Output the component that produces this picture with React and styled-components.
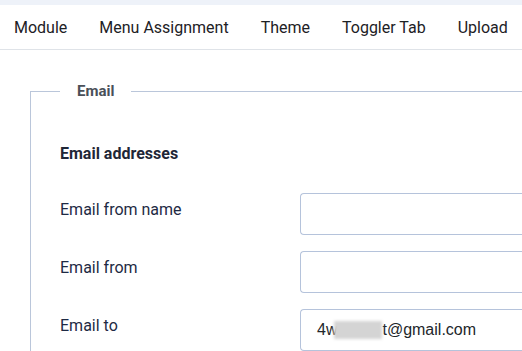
import styled, { createGlobalStyle } from "styled-components";

const GlobalStyle = createGlobalStyle`
  html, body {
    margin: 0;
    padding: 0;
    background: #fff;
    overflow: hidden;
  }
  body {
    font-family: Roboto, "Liberation Sans", sans-serif;
    color: #22262a;
  }
`;

const TopStrip = styled.div`
  height: 5px;
  background-color: #eef2f9;
`;

const Tabs = styled.nav`
  display: flex;
  align-items: center;
  height: 44px;
  padding-left: 14px;
  gap: 32px;
  border-bottom: 1px solid #dfe3e8;
  white-space: nowrap;
`;

const Tab = styled.span`
  font-size: 16px;
  color: #1d2125;
`;

const Content = styled.div`
  padding: 30px 0 0 30px;
`;

const Fieldset = styled.fieldset`
  margin: 0;
  padding: 40px 0 0 29px;
  border: 1px solid #bac6da;
  border-right: none;
  border-bottom: none;
  min-width: 0;
`;

const Legend = styled.legend`
  padding: 0 17px;
  font-size: 15px;
  font-weight: 700;
  line-height: 22px;
  color: #4a5058;
`;

const Heading = styled.h3`
  margin: 0 0 27px;
  font-size: 16px;
  font-weight: 700;
  line-height: 24px;
  color: #1f2737;
`;

const Rows = styled.div`
  display: flex;
  flex-direction: column;
  gap: 16px;
`;

const Row = styled.div`
  display: flex;
  align-items: flex-start;
`;

const Label = styled.label`
  flex: 0 0 240px;
  padding-top: 5px;
  font-size: 16px;
  line-height: 24px;
  color: #1e2a44;
`;

const Field = styled.div`
  flex: 0 0 222px;
  height: 42px;
  box-sizing: border-box;
  display: flex;
  align-items: center;
  padding: 0 0 0 16px;
  border: 1px solid #b5c3db;
  border-right: none;
  border-radius: 4px 0 0 4px;
  font-family: "Liberation Sans", Arial, sans-serif;
  font-size: 16px;
  color: #22262a;
  white-space: nowrap;
`;

const Hidden = styled.span`
  display: inline-block;
  margin-left: -3px;
  background: #d4d4d4;
  filter: blur(1.5px);
  width: 48px;
  height: 18px;
`;

const tabs = ["Module", "Menu Assignment", "Theme", "Toggler Tab", "Upload"];

export default function App() {
  return (
    <>
      <GlobalStyle />
      <TopStrip />
      <Tabs>
        {tabs.map((t) => (
          <Tab key={t}>{t}</Tab>
        ))}
      </Tabs>
      <Content>
        <Fieldset>
          <Legend>Email</Legend>
          <Heading>Email addresses</Heading>
          <Rows>
            <Row>
              <Label>Email from name</Label>
              <Field />
            </Row>
            <Row>
              <Label>Email from</Label>
              <Field />
            </Row>
            <Row>
              <Label>Email to</Label>
              <Field>
                <span>4w</span>
                <Hidden />
                <span>t@gmail.com</span>
              </Field>
            </Row>
          </Rows>
        </Fieldset>
      </Content>
    </>
  );
}
